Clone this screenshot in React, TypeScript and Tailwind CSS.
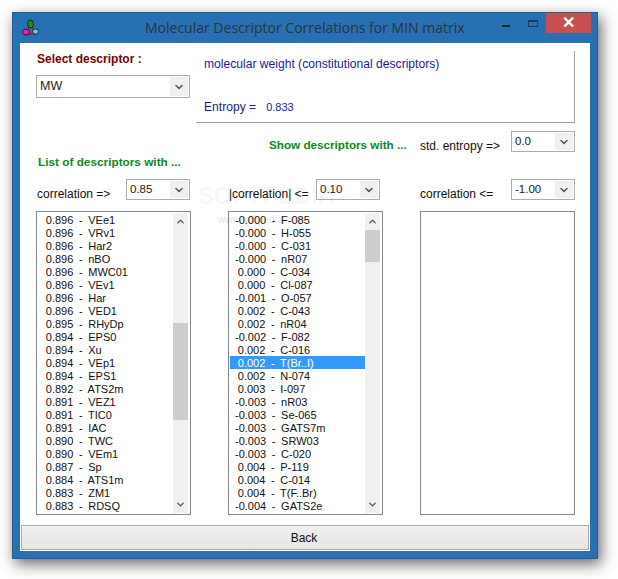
import { ChevronDown, ChevronUp } from "lucide-react";

const leftRows = [
	" 0.896  -  VEe1", " 0.896  -  VRv1", " 0.896  -  Har2", " 0.896  -  nBO", " 0.896  -  MWC01", " 0.896  -  VEv1",
	" 0.896  -  Har", " 0.896  -  VED1", " 0.895  -  RHyDp", " 0.894  -  EPS0", " 0.894  -  Xu", " 0.894  -  VEp1",
	" 0.894  -  EPS1", " 0.892  -  ATS2m", " 0.891  -  VEZ1", " 0.891  -  TIC0", " 0.891  -  IAC", " 0.890  -  TWC",
	" 0.890  -  VEm1", " 0.887  -  Sp", " 0.884  -  ATS1m", " 0.883  -  ZM1", " 0.883  -  RDSQ",
];

const middleRows = [
	"-0.000  -  F-085", "-0.000  -  H-055", "-0.000  -  C-031", "-0.000  -  nR07", " 0.000  -  C-034", " 0.000  -  Cl-087",
	"-0.001  -  O-057", " 0.002  -  C-043", " 0.002  -  nR04", "-0.002  -  F-082", " 0.002  -  C-016", " 0.002  -  T(Br..I)",
	" 0.002  -  N-074", " 0.003  -  I-097", "-0.003  -  nR03", "-0.003  -  Se-065", "-0.003  -  GATS7m", "-0.003  -  SRW03",
	"-0.003  -  C-020", " 0.004  -  P-119", " 0.004  -  C-014", " 0.004  -  T(F..Br)", "-0.004  -  GATS2e",
];

const Combo = ({ value, className, textClass = "pt-[2px] text-[11.5px]" }: { value: string; className: string; textClass?: string }) => (
	<div className={`flex border border-[#acacac] bg-white ${className}`}>
		<span className={`flex-1 pl-[3px] leading-[15px] text-[#222] ${textClass}`}>{value}</span>
		<span className="my-px mr-px flex w-[18px] items-center justify-center bg-[#f0f0f0]">
			<ChevronDown size={12} strokeWidth={3} className="text-[#555]" />
		</span>
	</div>
);

const Scrollbar = ({ before, thumb }: { before: string; thumb: string }) => (
	<div className="flex w-[15px] flex-col bg-[#f0f0f0]">
		<span className="flex h-[17px] items-center justify-center">
			<ChevronUp size={11} strokeWidth={3} className="text-[#555]" />
		</span>
		<div className={before} />
		<div className={`bg-[#cdcdcd] ${thumb}`} />
		<div className="flex-1" />
		<span className="flex h-[17px] items-center justify-center">
			<ChevronDown size={11} strokeWidth={3} className="text-[#555]" />
		</span>
	</div>
);

const DescriptorList = ({ rows, selected, children }: { rows: string[]; selected?: number; children: React.ReactNode }) => (
	<div className="flex h-[304px] w-[155px] border border-[#828790] bg-white p-px pr-[2px]">
		<div className="flex-1 text-[11px] leading-[13px] text-[#111] [word-spacing:-0.25px]">
			{rows.map((row, index) => (
				<div
					key={index}
					className={index === selected ? "h-[13px] whitespace-pre bg-[#3399ff] pl-[5px] pt-px text-white" : "h-[13px] whitespace-pre pl-[5px] pt-px"}
				>
					{row}
				</div>
			))}
		</div>
		{children}
	</div>
);

const AppIcon = () => (
	<svg width="17" height="18" viewBox="0 0 17 18">
		<path d="M8.5 6 L3 15 M8.5 6 L14 15 M3 15 L14 15" stroke="#c01010" strokeWidth="1.4" fill="none" />
		<ellipse cx="8.5" cy="5" rx="3" ry="4" fill="#0a9a10" stroke="#300" strokeWidth="0.8" />
		<ellipse cx="4" cy="13" rx="3.6" ry="3" fill="#e020c0" stroke="#300" strokeWidth="0.8" />
		<ellipse cx="13.5" cy="12.5" rx="2.8" ry="2.6" fill="#50e0e0" stroke="#300" strokeWidth="0.8" />
	</svg>
);

const App = () => {
	return (
		<div className="h-[579px] w-[618px] overflow-hidden bg-white pl-[12px] pt-[12px] font-['Liberation_Sans',sans-serif]">
			<div className="relative flex h-[547px] w-[586px] flex-col border border-[#1f5f98] bg-[#2770b3] shadow-[3px_5px_14px_rgba(0,0,0,0.6)]">
				<div className="flex h-[30px] items-start">
					<div className="ml-[9px] mt-[6px] w-[17px]">
						<AppIcon />
					</div>
					<div className="ml-[106px] mt-[4px] whitespace-nowrap font-['Open_Sans',sans-serif] text-[14px] leading-[22px] text-[#2b333b]">
						Molecular Descriptor Correlations for MIN matrix
					</div>
					<div className="ml-auto flex items-start">
						<span className="mt-[12px] h-[2px] w-[8px] bg-[#222]" />
						<span className="ml-[18px] mt-[7px] h-[7px] w-[10px] border border-[#1c3a5a] border-t-2" />
						<span className="ml-[8px] mr-[6px] flex h-[20px] w-[45px] items-center justify-center bg-[#c75050] text-[16px] font-bold leading-none text-white">
							✕
						</span>
					</div>
				</div>

				<div className="mx-[7px] flex h-[508px] flex-col bg-white">
					<div className="pl-[16px] pr-[15px] pt-[8px]">
						<div className="flex">
							<div className="w-[155px]">
								<div className="pl-px pt-px text-[12px] font-bold leading-[14px] text-[#800000]">Select descriptor :</div>
								<Combo value="MW" className="mt-[9px] h-[23px] w-[154px]" textClass="pt-[3px] text-[12.5px]" />
							</div>
							<div className="ml-[5px] flex h-[72px] w-[379px] flex-col border-b border-r border-[#a0a0a0] pl-[8px] text-[12.1px] leading-[14px] text-[#1a1a99]">
								<div className="pt-[6px]">molecular weight (constitutional descriptors)</div>
								<div className="mt-[29px] whitespace-pre">
									Entropy =   <span className="text-[11px]">0.833</span>
								</div>
							</div>
						</div>

						<div className="mt-[8px] flex h-[21px] items-start">
							<div className="ml-[233px] w-[151px] pt-[7px] text-[11.7px] font-bold leading-[14px] text-[#0a8a20]">Show descriptors with ...</div>
							<div className="w-[91px] pt-[8px] text-[12px] leading-[14px] text-[#111]">std. entropy =&gt;</div>
							<Combo value="0.0" className="h-[21px] w-[64px]" />
						</div>

						<div className="mt-[3px] pl-[2px] text-[11.8px] font-bold leading-[14px] text-[#0a8a20]">List of descriptors with ...</div>

						<div className="mt-[10px] flex h-[21px] gap-[37px] text-[12px] leading-[14px] text-[#111]">
							<div className="flex w-[155px]">
								<div className="w-[90px] pl-px pt-[8px]">correlation =&gt;</div>
								<Combo value="0.85" className="h-[21px] w-[64px]" />
							</div>
							<div className="flex w-[155px]">
								<div className="w-[88px] pl-px pt-[8px]">|correlation| &lt;=</div>
								<Combo value="0.10" className="h-[21px] w-[64px]" />
							</div>
							<div className="flex w-[155px]">
								<div className="w-[91px] pt-[8px]">correlation &lt;=</div>
								<Combo value="-1.00" className="h-[21px] w-[64px]" />
							</div>
						</div>

						<div className="mt-[11px] flex gap-[37px]">
							<DescriptorList rows={leftRows}>
								<Scrollbar before="h-[93px]" thumb="h-[97px]" />
							</DescriptorList>
							<DescriptorList rows={middleRows} selected={11}>
								<Scrollbar before="h-0" thumb="h-[32px]" />
							</DescriptorList>
							<DescriptorList rows={[]}>
								<div />
							</DescriptorList>
						</div>
					</div>

					<button className="mx-px mt-[10px] h-[25px] border border-[#acacac] bg-gradient-to-b from-[#f0f0f0] to-[#e5e5e5] pr-[2px] text-[12px] text-[#111]">
						Back
					</button>
				</div>

				<div className="pointer-events-none absolute left-[185px] top-[169px] text-[24px] font-bold leading-[28px] text-[#000]/5">SOFTPEDIA</div>
				<div className="pointer-events-none absolute left-[205px] top-[201px] text-[10px] leading-[12px] text-[#000]/15">www.softpedia.com</div>
			</div>
		</div>
	);
};

export default App;
